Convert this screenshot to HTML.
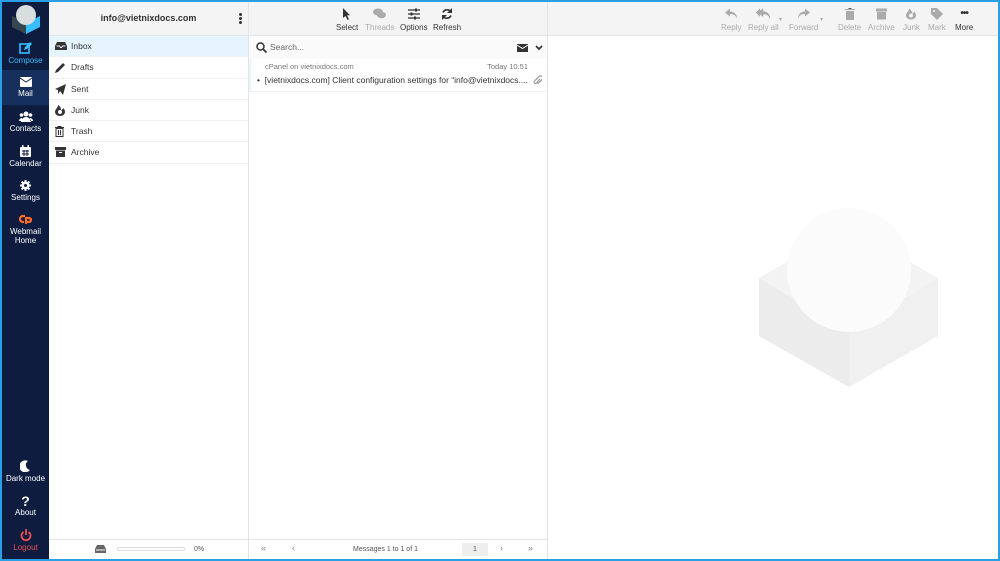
<!DOCTYPE html>
<html><head><meta charset="utf-8"><style>
*{box-sizing:border-box;margin:0;padding:0}
body{width:1000px;height:561px;overflow:hidden;background:#2b9fe6;font-family:"Liberation Sans",sans-serif;position:relative}
#app{position:absolute;left:2px;top:2px;width:996px;height:557px;background:#fff;overflow:hidden}
#side{position:absolute;left:0;top:0;width:47px;height:557px;background:#0e1c3f;color:#fff;text-align:center;font-size:8px}
.it{position:absolute;left:0;width:47px;text-align:center;line-height:9px}
.it svg{display:block;margin:0 auto 2px}
#f1{position:absolute;left:47px;top:0;width:200px;height:557px;border-right:1px solid #e2e5e8}
#f2{position:absolute;left:247px;top:0;width:299px;height:557px;border-right:1px solid #e2e5e8}
#f3{position:absolute;left:546px;top:0;width:450px;height:557px}
.hd{position:absolute;left:0;top:0;right:0;height:34px;background:#f4f4f4;border-bottom:1px solid #e2e5e8}
.row{height:21.3px;border-bottom:1px solid #eef0f2;font-size:8.5px;color:#333;padding-left:22px;line-height:21px;position:relative}
.row svg{position:absolute;left:6px;top:5px}
.tb{position:absolute;top:6px;text-align:center;font-size:8px;color:#333}
.tb svg{display:block;margin:0 auto 3px}
.dis{color:#aaa}
.ft{position:absolute;bottom:0;left:0;right:0;height:20px;border-top:1px solid #e2e5e8;font-size:7px;color:#555}
</style></head><body><div id="app">
<div id="side">
 <svg style="position:absolute;left:8px;top:2px" width="32" height="30" viewBox="0 0 32 30"><polygon points="2,12 16,19 16,30 2,23" fill="#37474f"/><polygon points="16,19 30,12 30,23 16,30" fill="#37beff"/><circle cx="16" cy="11" r="10" fill="#d8dde0"/></svg>
 <div class="it" style="top:40px;color:#37beff"><svg width="13" height="12" viewBox="0 0 13 12"><rect x="1" y="2" width="9" height="9" fill="none" stroke="#37beff" stroke-width="1.6"/><path d="M5 8l1-3 5-5 2 2-5 5z" fill="#37beff"/></svg>Compose</div>
 <div class="it" style="top:68px;height:35px;background:#16305e;padding-top:7px"><svg width="12" height="10" viewBox="0 0 12 10"><rect width="12" height="10" rx="1" fill="#fff"/><path d="M0 1l6 4 6-4" stroke="#16305e" fill="none"/></svg>Mail</div>
 <div class="it" style="top:109px"><svg width="14" height="11" viewBox="0 0 14 11"><circle cx="7" cy="3" r="2.5" fill="#fff"/><circle cx="2.5" cy="4" r="1.8" fill="#fff"/><circle cx="11.5" cy="4" r="1.8" fill="#fff"/><path d="M2 11a5 5 0 0 1 10 0zM0 10a3 3 0 0 1 3-3v3zM14 10a3 3 0 0 0-3-3v3z" fill="#fff"/></svg>Contacts</div>
 <div class="it" style="top:143px"><svg width="11" height="12" viewBox="0 0 11 12"><rect y="2" width="11" height="10" rx="1" fill="#fff"/><rect x="2" width="1.5" height="3" fill="#fff"/><rect x="7.5" width="1.5" height="3" fill="#fff"/><path d="M2 6h7M2 9h7M4 5v6M7 5v6" stroke="#0e1c3f"/></svg>Calendar</div>
 <div class="it" style="top:178px"><svg width="11" height="11" viewBox="0 0 11 11"><circle cx="5.5" cy="5.5" r="4" fill="#fff"/><path d="M5.5 0v11M0 5.5h11M1.6 1.6l7.8 7.8M9.4 1.6l-7.8 7.8" stroke="#fff" stroke-width="2"/><circle cx="5.5" cy="5.5" r="1.5" fill="#0e1c3f"/></svg>Settings</div>
 <div class="it" style="top:212px"><svg width="14" height="11" viewBox="0 0 14 11"><path d="M6 2H4a3 3 0 0 0 0 6h1M7 10V4h3a2 2 0 0 1 0 4H8" stroke="#ff6c2c" stroke-width="2.2" fill="none"/></svg>Webmail<br>Home</div>
 <div class="it" style="top:458px"><svg width="11" height="12" viewBox="0 0 11 12"><path d="M8 1a6 6 0 1 0 2 9A5 5 0 0 1 8 1z" fill="#fff"/></svg>Dark mode</div>
 <div class="it" style="top:493px"><div style="font-size:14px;font-weight:bold;line-height:13px">?</div>About</div>
 <div class="it" style="top:527px;color:#f0504f"><svg width="12" height="12" viewBox="0 0 12 12"><path d="M3.5 3a4.5 4.5 0 1 0 5 0" stroke="#f0504f" stroke-width="1.8" fill="none"/><path d="M6 0v6" stroke="#f0504f" stroke-width="1.8"/></svg>Logout</div>
</div>
<div id="f1">
 <div class="hd"><div style="text-align:center;font-size:9px;font-weight:bold;color:#333;line-height:32px">info@vietnixdocs.com</div><div style="position:absolute;right:6px;top:11px;width:3px;font-size:0"><i style="display:block;width:3px;height:3px;background:#333;border-radius:50%;margin-bottom:1px"></i><i style="display:block;width:3px;height:3px;background:#333;border-radius:50%;margin-bottom:1px"></i><i style="display:block;width:3px;height:3px;background:#333;border-radius:50%"></i></div></div>
 <div style="position:absolute;top:34px;left:0;right:0">
  <div class="row" style="background:#e5f4fd"><svg width="12" height="10" viewBox="0 0 12 10"><path d="M0 5l2-4h8l2 4v4H0z" fill="#333"/><path d="M1.5 5h3l1 1.5h1l1-1.5h3" stroke="#e5f4fd" fill="none"/></svg>Inbox</div>
  <div class="row"><svg width="11" height="11" viewBox="0 0 11 11"><path d="M0 11l1-3 7-7 2 2-7 7z" fill="#333"/></svg>Drafts</div>
  <div class="row"><svg width="11" height="11" viewBox="0 0 11 11"><path d="M0 5l11-5-3 11-3-4-2 3v-4z" fill="#333"/></svg>Sent</div>
  <div class="row"><svg width="10" height="11" viewBox="0 0 10 11"><path d="M3 0c0 3-3 4-3 7a5 4 0 0 0 10 0c0-2-1-3-2-4 0 1-1 2-2 2C6 3 5 1 3 0z" fill="#333"/><circle cx="5" cy="7" r="2" fill="#fff"/></svg>Junk</div>
  <div class="row"><svg width="9" height="11" viewBox="0 0 9 11"><path d="M0 1.5h9M3 1.5V0h3v1.5" stroke="#333"/><rect x="1" y="2.5" width="7" height="8" fill="none" stroke="#333"/><path d="M3.5 4v5M5.5 4v5" stroke="#333"/></svg>Trash</div>
  <div class="row"><svg width="11" height="10" viewBox="0 0 11 10"><rect width="11" height="3" fill="#333"/><rect x="1" y="3.5" width="9" height="6.5" fill="#333"/><rect x="4" y="5" width="3" height="1" fill="#fff"/></svg>Archive</div>
 </div>
 <div class="ft"><svg style="position:absolute;left:46px;top:5px" width="11" height="8" viewBox="0 0 11 8"><path d="M2 0h7l2 4v4H0V4z" fill="#666"/><rect x="1" y="4.5" width="9" height="1" fill="#fff"/></svg><div style="position:absolute;left:68px;top:7px;width:68px;height:4px;border:1px solid #ddd;border-radius:2px"></div><span style="position:absolute;left:145px;top:6px">0%</span></div>
</div>
<div id="f2">
 <div class="hd">
  <div class="tb" style="left:87px"><svg width="9" height="12" viewBox="0 0 9 12"><path d="M0 0v10l2.5-2 2 4 1.5-.7-2-4H7z" fill="#333"/></svg>Select</div>
  <div class="tb dis" style="left:116px"><svg width="13" height="12" viewBox="0 0 13 12"><ellipse cx="5" cy="4" rx="5" ry="3.5" fill="#aaa"/><ellipse cx="8.5" cy="7" rx="4.5" ry="3.2" fill="#aaa"/></svg>Threads</div>
  <div class="tb" style="left:151px"><svg width="12" height="12" viewBox="0 0 12 12"><path d="M0 2h12M0 6h12M0 10h12" stroke="#333" stroke-width="1.3"/><rect x="7" y="0.5" width="2" height="3" fill="#333"/><rect x="2.5" y="4.5" width="2" height="3" fill="#333"/><rect x="6" y="8.5" width="2" height="3" fill="#333"/></svg>Options</div>
  <div class="tb" style="left:184px"><svg width="12" height="12" viewBox="0 0 12 12"><path d="M10 4A4.5 4.5 0 0 0 2 4.5M2 8a4.5 4.5 0 0 0 8-.5" stroke="#333" stroke-width="1.6" fill="none"/><path d="M11 0v5H6zM1 12V7h5z" fill="#333"/></svg>Refresh</div>
 </div>
 <div style="position:absolute;top:35px;left:0;right:0;height:22px;font-size:8.5px;color:#666;line-height:21px;padding-left:21px;background:#fafafa"><svg style="position:absolute;left:7px;top:5px" width="11" height="11" viewBox="0 0 11 11"><circle cx="4.5" cy="4.5" r="3.5" stroke="#333" stroke-width="1.5" fill="none"/><path d="M7 7l3.5 3.5" stroke="#333" stroke-width="1.8"/></svg>Search...
  <svg style="position:absolute;left:268px;top:7px" width="11" height="8" viewBox="0 0 11 8"><rect width="11" height="8" fill="#333"/><path d="M0 1l5.5 3.5L11 1" stroke="#fafafa" fill="none"/></svg>
  <svg style="position:absolute;left:286px;top:8px" width="8" height="6" viewBox="0 0 8 6"><path d="M1 1l3 3 3-3" stroke="#333" stroke-width="1.7" fill="none"/></svg></div>
 <div style="position:absolute;top:57px;left:0;right:0;height:33px;border-left:2px solid #e5f4fd;border-bottom:1px solid #eef0f2;font-size:7.5px;color:#777">
  <span style="position:absolute;left:14px;top:3px">cPanel on vietnixdocs.com</span><span style="position:absolute;right:19px;top:3px">Today 10:51</span>
  <span style="position:absolute;left:6px;top:16px;font-size:8.5px;color:#333">•&nbsp; [vietnixdocs.com] Client configuration settings for “info@vietnixdocs....</span>
  <svg style="position:absolute;right:5px;top:16px" width="9" height="11" viewBox="0 0 9 11"><path d="M7 4L3.5 8a1.3 1.3 0 0 1-2-2L6 1.5a2 2 0 0 1 3 3L4.5 9" stroke="#999" stroke-width="1.2" fill="none"/></svg>
 </div>
 <div class="ft"><span style="position:absolute;left:12px;top:3px;font-size:9px;color:#888">«</span><span style="position:absolute;left:43px;top:3px;font-size:9px;color:#888">‹</span><span style="position:absolute;left:104px;top:6px">Messages 1 to 1 of 1</span><div style="position:absolute;left:213px;top:3px;width:26px;height:13px;background:#eee;border-radius:2px;text-align:center;line-height:13px">1</div><span style="position:absolute;left:251px;top:3px;font-size:9px;color:#888">›</span><span style="position:absolute;left:279px;top:3px;font-size:9px;color:#888">»</span></div>
</div>
<div id="f3">
 <div class="hd" style="color:#aaa">
  <div class="tb dis" style="left:173px"><svg width="12" height="12" viewBox="0 0 12 11"><path d="M5 0L0 4l5 4V5.5c4 0 6 1.5 7 5 0-5-3-7.5-7-7.5z" fill="#aaa"/></svg>Reply</div>
  <div class="tb dis" style="left:200px"><svg width="14" height="12" viewBox="0 0 14 11"><path d="M7 0L2 4l5 4V5.5c4 0 6 1.5 7 5 0-5-3-7.5-7-7.5zM4 0L0 4l4 4" fill="#aaa" stroke="#aaa" stroke-width=".5"/></svg>Reply all</div>
  <div style="position:absolute;left:231px;top:14px;font-size:6px;color:#aaa">▾</div>
  <div class="tb dis" style="left:241px"><svg width="12" height="12" viewBox="0 0 12 11"><path d="M7 0l5 4-5 4V5.5c-4 0-6 1.5-7 5 0-5 3-7.5 7-7.5z" fill="#aaa"/></svg>Forward</div>
  <div style="position:absolute;left:272px;top:14px;font-size:6px;color:#aaa">▾</div>
  <div class="tb dis" style="left:290px"><svg width="10" height="12" viewBox="0 0 10 12"><path d="M0 1.5h10M3.5 1.5V0h3v1.5" stroke="#aaa"/><rect x="1" y="3" width="8" height="9" fill="#aaa"/></svg>Delete</div>
  <div class="tb dis" style="left:320px"><svg width="11" height="12" viewBox="0 0 11 11"><rect width="11" height="3" fill="#aaa"/><rect x="1" y="3.5" width="9" height="7.5" fill="#aaa"/></svg>Archive</div>
  <div class="tb dis" style="left:355px"><svg width="10" height="12" viewBox="0 0 10 11"><path d="M3 0c0 3-3 4-3 7a5 4 0 0 0 10 0c0-2-1-3-2-4 0 1-1 2-2 2C6 3 5 1 3 0z" fill="#aaa"/><circle cx="5" cy="7" r="2" fill="#f4f4f4"/></svg>Junk</div>
  <div class="tb dis" style="left:380px"><svg width="12" height="12" viewBox="0 0 12 12"><path d="M0 0h6l6 6-6 6-6-6z" fill="#aaa"/><circle cx="3" cy="3" r="1" fill="#f4f4f4"/></svg>Mark</div>
  <div class="tb" style="left:407px"><div style="font-size:10px;font-weight:bold;line-height:12px;letter-spacing:-1px;margin-bottom:3px">•••</div>More</div>
 </div>
 <svg style="position:absolute;left:0;top:0" width="450" height="557" viewBox="546 0 450 557"><polygon points="757,276 847,225 936,276 847,327" fill="#f3f3f3"/><polygon points="757,276 847,328 847,385 757,334" fill="#ececec"/><polygon points="847,328 936,276 936,334 847,385" fill="#f0f0f0"/><circle cx="847" cy="268" r="62" fill="#fbfbfb"/></svg>
</div>
</div></body></html>
